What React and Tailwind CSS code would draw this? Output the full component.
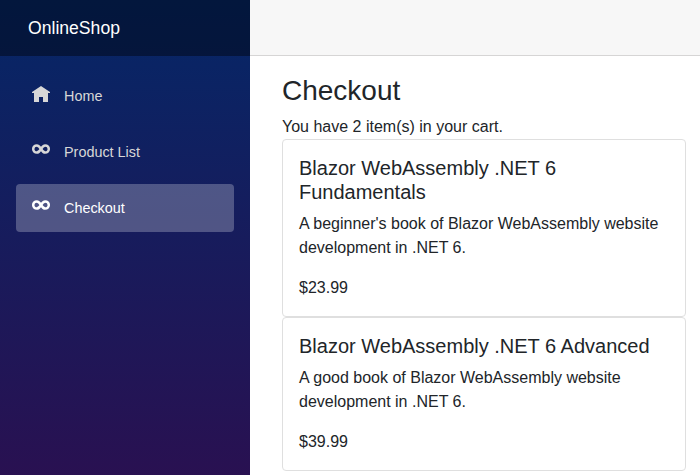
const HomeIcon = () => (
  <svg className="mr-3 mt-[-4px] block w-[22px] h-4 shrink-0" viewBox="0 0 22 16" fill="currentColor">
    <path d="M11 0 2 6v1h2v9h5v-5h4v5h5V7h2V6z" />
  </svg>
);

const InfinityIcon = () => (
  <svg className="mr-3 mt-[-6px] block w-[22px] h-[12px] shrink-0" viewBox="0 0 22 12" fill="none" stroke="currentColor" strokeWidth="2.5">
    <path d="M11 6C9.500 3.500 8.400 2.400 6.800 2.400a3.600 3.600 0 0 0 0 7.200C8.400 9.600 9.500 8.500 11 6s2.600-3.600 4.200-3.600a3.600 3.600 0 0 1 0 7.200C13.600 9.600 12.500 8.500 11 6z" />
  </svg>
);

const links = [
  { label: "Home", Icon: HomeIcon },
  { label: "Product List", Icon: InfinityIcon },
  { label: "Checkout", Icon: InfinityIcon, active: true },
];

const items = [
  {
    title: "Blazor WebAssembly .NET 6 Fundamentals",
    text: "A beginner's book of Blazor WebAssembly website development in .NET 6.",
    price: "$23.99",
  },
  {
    title: "Blazor WebAssembly .NET 6 Advanced",
    text: "A good book of Blazor WebAssembly website development in .NET 6.",
    price: "$39.99",
  },
];

export default function App() {
  return (
    <div className="flex h-[475px] w-[700px] overflow-hidden bg-white font-['Liberation_Sans',Arial,sans-serif] text-[#212529]">
      <aside className="w-[250px] shrink-0 bg-[linear-gradient(180deg,#052767_0px,#3a0647_700px)]">
        <div className="flex h-14 items-center bg-black/40 pl-7 text-[17.6px] text-white">OnlineShop</div>
        <nav className="flex flex-col gap-2 px-4 pt-4">
          {links.map(({ label, Icon, active }) => (
            <a
              key={label}
              className={`flex h-12 items-center rounded-[4px] pl-[14px] text-[14.4px] leading-[50px] ${active ? "bg-white/25 text-white" : "text-[#d7d7d7]"}`}
            >
              <Icon />
              {label}
            </a>
          ))}
        </nav>
      </aside>
      <main className="flex min-w-0 flex-1 flex-col">
        <div className="h-14 shrink-0 border-b border-[#d6d5d5] bg-[#f7f7f7]" />
        <article className="pl-8 pr-[14px] pt-[17.6px]">
          <h1 className="mb-2 text-[28px] leading-[33.6px]">Checkout</h1>
          <div className="text-base leading-6">You have 2 item(s) in your cart.</div>
          {items.map((item) => (
            <section key={item.title} className="rounded-[4px] border border-[#dfdfdf] p-4">
              <h5 className="mb-2 text-[20px] leading-6">{item.title}</h5>
              <p className="mb-4 text-base leading-6">{item.text}</p>
              <p className="text-base leading-6">{item.price}</p>
            </section>
          ))}
        </article>
      </main>
    </div>
  );
}
